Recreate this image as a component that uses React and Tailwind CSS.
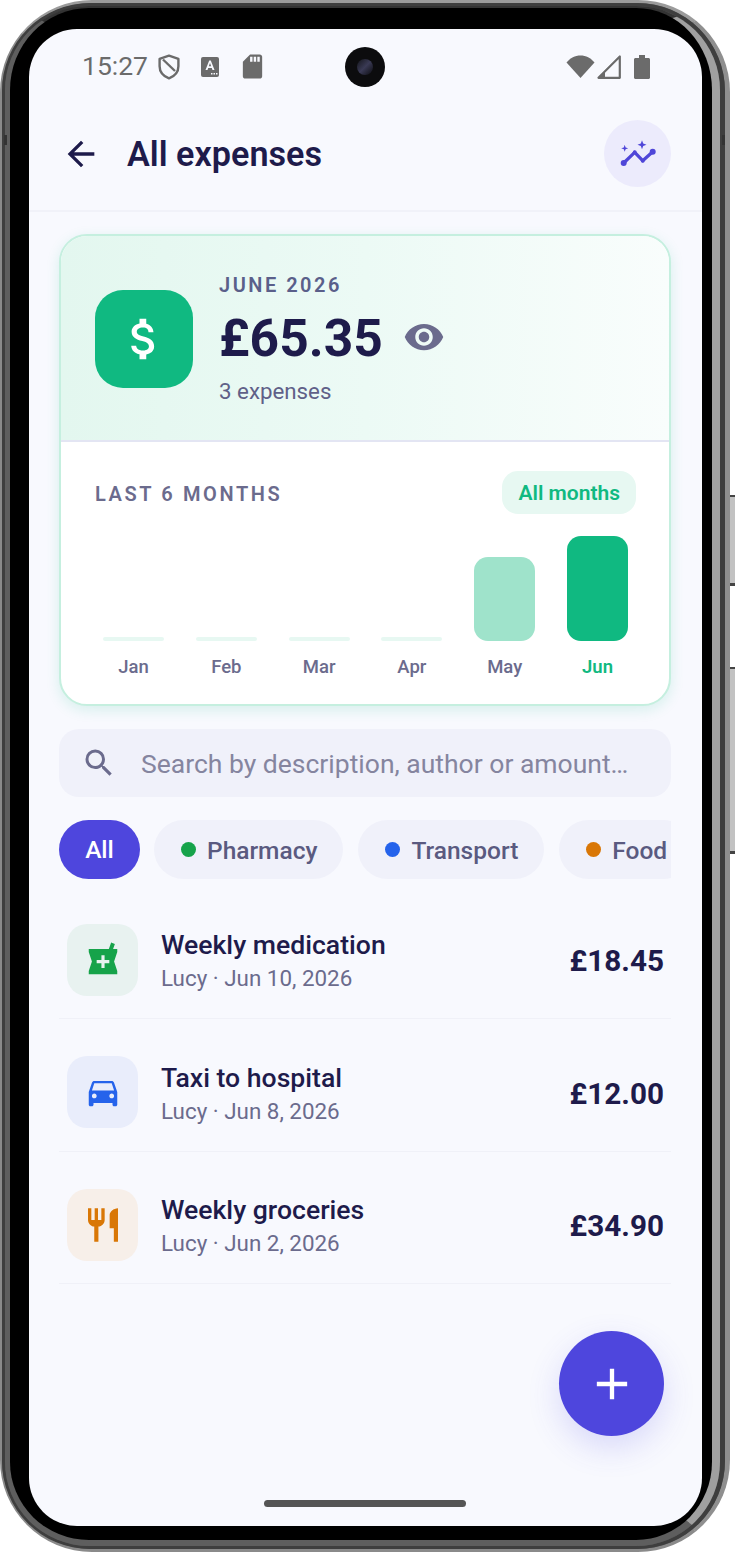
import React from "react";
import { MdArrowBack, MdAttachMoney, MdVisibility, MdLocalPharmacy, MdDirectionsCar, MdRestaurant, MdAdd, MdSearch, MdSdCard } from "react-icons/md";

const ShieldIcon = () => (
  <svg width="22" height="26" viewBox="0 0 22 26" fill="none" stroke="#6b6b6b" strokeWidth="2.400" strokeLinejoin="round">
    <path d="M11 1.600 20.400 4.800v7.400c0 5.600-3.800 9.900-9.400 12.200C5.400 22.100 1.600 17.800 1.600 12.200V4.800Z" />
    <path d="M5 5.500 17 17" />
  </svg>
);

const KeyboardA = () => (
  <svg width="18" height="20" viewBox="0 0 18 20">
    <rect width="18" height="20" rx="2" fill="#6b6b6b" />
    <path d="M4.500 13 8.200 3.500h1.600L13.500 13h-2l-.7-2H7.200l-.7 2ZM7.800 9.300h2.400L9 6Z" fill="#f8f9fe" />
    <rect x="10" y="16" width="1.500" height="1.500" fill="#f8f9fe" />
    <rect x="12.500" y="16" width="1.500" height="1.500" fill="#f8f9fe" />
    <rect x="15" y="16" width="1.500" height="1.500" fill="#f8f9fe" />
  </svg>
);

const Wifi = () => (
  <svg width="29" height="23" viewBox="0 0 29 23"><path d="M14.500 23 .5 7.500C4.300 3 9 .5 14.500.5S24.700 3 28.500 7.500Z" fill="#6b6b6b" /></svg>
);

const Cell = () => (
  <svg width="24" height="24" viewBox="0 0 24 24" fill="none"><path d="M1.500 22.800 22.800 1.500v21.300Z" stroke="#6b6b6b" strokeWidth="2.200" strokeLinejoin="round" /><path d="M1.500 22.800 8 16.500v6.300Z" fill="#6b6b6b" /></svg>
);

const Battery = () => (
  <svg width="16" height="24" viewBox="0 0 16 24"><path d="M5 0h6v3h3.500c.8 0 1.500.7 1.500 1.500V22.500c0 .8-.7 1.500-1.500 1.500h-13C.7 24 0 23.300 0 22.500V4.500C0 3.700.7 3 1.500 3H5Z" fill="#6b6b6b" /></svg>
);

const TrendSpark = () => (
  <svg width="40" height="40" viewBox="0 0 40 40" fill="#4f46d8">
    <path d="M5.700 29 16.700 18.300 24.700 26.700 34.700 17.700" fill="none" stroke="#4f46d8" strokeWidth="3.200" strokeLinejoin="round" />
    <circle cx="5.700" cy="29" r="3" />
    <circle cx="16.700" cy="18.300" r="2" />
    <circle cx="24.700" cy="26.700" r="2" />
    <circle cx="34.700" cy="17.700" r="3" />
    <path d="M6.700 10.800 7.600 13.400 10.200 14.300 7.600 15.200 6.700 17.800 5.800 15.200 3.200 14.300 5.800 13.400Z" />
    <path d="M24 6.200 25.200 9.500 28.500 10.700 25.200 11.900 24 15.200 22.800 11.900 19.500 10.700 22.800 9.500Z" />
  </svg>
);

const Bar = ({ label, active, kind }) => (
  <div className="flex w-[61px] flex-col items-center">
    <div className="flex h-[105px] w-full items-end">
      {kind === "tall" && <div className="h-[105px] w-full rounded-[14px] bg-[#10b981]" />}
      {kind === "mid" && <div className="h-[84px] w-full rounded-[14px] bg-[#9fe3cb]" />}
      {!kind && <div className="h-[4px] w-full rounded-full bg-[#e7f8f2]" />}
    </div>
    <span className={`mt-[14px] text-[18.500px] leading-[24px] font-medium ${active ? "text-[#10b981] font-semibold" : "text-[#6b6b8d]"}`}>{label}</span>
  </div>
);

const Chip = ({ color, label }) => (
  <div className="flex h-[59px] shrink-0 items-center gap-[11px] rounded-full bg-[#f0f1fa] pl-[27px] pr-[26px]">
    <span className="h-[15px] w-[15px] rounded-full" style={{ backgroundColor: color }} />
    <span className="pt-[3px] text-[24.500px] leading-none font-medium text-[#5a5a80] whitespace-nowrap">{label}</span>
  </div>
);

const Row = ({ icon, bg, title, sub, amount }) => (
  <div className="mb-[15.500px] flex h-[117px] items-center border-b border-[#f0f1f8] pl-[8px] pr-[7px] pb-[1px]">
    <div className={`flex h-[72px] w-[71px] shrink-0 items-center justify-center rounded-[20px] ${bg}`}>{icon}</div>
    <div className="ml-[23px] flex flex-1 flex-col pt-[3px]">
      <span className="text-[26.600px] leading-[33px] font-medium text-[#1e1b4b]">{title}</span>
      <span className="mt-[1px] text-[22.400px] leading-[32px] text-[#6b6b8d]">{sub}</span>
    </div>
    <span className="pt-[4px] text-[29.700px] font-bold text-[#1e1b4b]">{amount}</span>
  </div>
);

export default function App() {
  return (
    <div className="relative h-[1553px] w-[735px] overflow-hidden bg-white" style={{ fontFamily: "Roboto, sans-serif" }}>
      <div className="absolute left-[730px] top-[495px] h-[91px] w-[5px] border-t-[2px] border-b-[3px] border-[#444] bg-[#c2c2c2]" />
      <div className="absolute left-[730px] top-[667px] h-[187px] w-[5px] border-t-[2px] border-b-[3px] border-[#444] bg-[#c2c2c2]" />

      <div className="h-[1552px] w-[730px] rounded-[92px] border-t-[3px] border-r-[5px] border-b-[3px] border-l-[2px] border-t-[#9b9b9b] border-r-[#8f8f8f] border-b-[#8a8a8a] border-l-[#8a8a8a] bg-[#555]">
        <div className="h-full w-full rounded-[88px] border-t-[3px] border-r-[5px] border-b-[3px] border-l-[3px] border-[#3e3e3e]">
          <div className="h-full w-full rounded-[84px] border-t-[2px] border-r-[8px] border-b-[6px] border-l-[5px] border-t-[#333] border-r-[#a0a0a0] border-b-[#5e5e5e] border-l-[#5e5e5e] bg-black pt-[21px] pr-[10px] pb-[14px] pl-[19px]">
            <div className="relative flex h-full flex-col overflow-hidden rounded-[48px] bg-[#f8f9fe]">
              {/* status bar */}
              <div className="flex h-[78px] shrink-0 items-center justify-between pr-[52px] pl-[53px] pb-[3px]">
                <div className="flex items-center">
                  <span className="text-[26.500px] leading-none text-[#6b6b6b]">15:27</span>
                  <span className="ml-[10px] flex"><ShieldIcon /></span>
                  <span className="ml-[21px] flex"><KeyboardA /></span>
                  <span className="ml-[23px] flex"><MdSdCard className="-mx-[4px]" size={29} color="#6b6b6b" /></span>
                </div>
                <div className="flex items-center">
                  <Wifi />
                  <span className="ml-[2px] flex"><Cell /></span>
                  <span className="ml-[13px] flex"><Battery /></span>
                </div>
              </div>

              {/* header */}
              <div className="flex h-[105px] shrink-0 items-center justify-between border-b-2 border-[#f1f2f9] pr-[31px] pl-[32px] pb-[10px]">
                <div className="flex items-center">
                  <MdArrowBack size={40} color="#1e1b4b" />
                  <h1 className="ml-[26px] pt-[2px] text-[34.200px] leading-none font-semibold text-[#1e1b4b]">All expenses</h1>
                </div>
                <div className="flex h-[67px] w-[67px] items-center justify-center rounded-full bg-[#ecebfc]">
                  <TrendSpark />
                </div>
              </div>

              <div className="flex flex-1 flex-col pr-[31px] pl-[30px] pt-[22px]">
                {/* summary card */}
                <div className="h-[472px] shrink-0 overflow-hidden rounded-[28px] border-2 border-[#c5efdf] bg-white shadow-[0_4px_14px_rgba(16,185,129,0.14)]">
                  <div className="flex h-[206px] items-center border-b-2 border-[#e3e5f3] bg-gradient-to-r from-[#e3f7ef] via-[#ecfaf5] to-[#f9fdfc] pl-[34px]">
                    <div className="mt-[2px] flex h-[98px] w-[98px] items-center justify-center rounded-[28px] bg-[#10b981]">
                      <MdAttachMoney size={54} color="#fff" />
                    </div>
                    <div className="ml-[26px] flex flex-col pt-[2px]">
                      <span className="text-[20px] leading-[26px] font-semibold tracking-[2.500px] text-[#5a5f8a]">JUNE 2026</span>
                      <div className="mt-[8px] flex items-center">
                        <span className="text-[51.500px] leading-[66px] font-bold text-[#1e1b4b]">£65.35</span>
                        <MdVisibility className="mb-[3px] ml-[20px]" size={42} color="#6b6b8d" />
                      </div>
                      <span className="mt-[4.500px] text-[22.300px] leading-[30px] text-[#5f6088]">3 expenses</span>
                    </div>
                  </div>

                  <div className="pl-[34px] pr-[33px] pt-[28px]">
                    <div className="flex h-[44px] items-center justify-between">
                      <span className="pt-[4px] text-[20px] font-semibold tracking-[2.600px] text-[#6b6b8d]">LAST 6 MONTHS</span>
                      <span className="flex h-[43px] items-center rounded-[16px] bg-[#e7f8f2] px-[16px] pt-[4px] text-[21px] font-semibold text-[#10b981]">All months</span>
                    </div>
                    <div className="mt-[22px] flex justify-between px-[8px]">
                      <Bar label="Jan" />
                      <Bar label="Feb" />
                      <Bar label="Mar" />
                      <Bar label="Apr" />
                      <Bar label="May" kind="mid" />
                      <Bar label="Jun" kind="tall" active />
                    </div>
                  </div>
                </div>

                {/* search */}
                <div className="mt-[23px] flex h-[68px] shrink-0 items-center rounded-[20px] bg-[#f0f1fa] pl-[22px]">
                  <MdSearch size={36} color="#6b6b8d" />
                  <span className="ml-[24px] pt-[2px] text-[26.500px] leading-none text-[#85859f] whitespace-nowrap">Search by description, author or amount…</span>
                </div>

                {/* chips */}
                <div className="mt-[23px] flex shrink-0 gap-[15px] overflow-hidden">
                  <div className="-mr-[1px] flex h-[59px] w-[81px] shrink-0 items-center justify-center rounded-full bg-[#4e46dd] pt-[2px] text-[24.500px] font-medium text-white">All</div>
                  <Chip color="#16a34a" label="Pharmacy" />
                  <Chip color="#2563eb" label="Transport" />
                  <Chip color="#d97706" label="Food" />
                </div>

                {/* rows */}
                <div className="mt-[23px] flex flex-col">
                  <Row bg="bg-[#e8f2f0]" icon={<MdLocalPharmacy size={38} color="#16a34a" />} title="Weekly medication" sub="Lucy · Jun 10, 2026" amount="£18.45" />
                  <Row bg="bg-[#e9edfb]" icon={<MdDirectionsCar size={38} color="#2563eb" />} title="Taxi to hospital" sub="Lucy · Jun 8, 2026" amount="£12.00" />
                  <Row bg="bg-[#f7efe9]" icon={<MdRestaurant size={40} color="#d97706" />} title="Weekly groceries" sub="Lucy · Jun 2, 2026" amount="£34.90" />
                </div>
              </div>

              {/* FAB */}
              <button className="absolute top-[1302px] left-[530px] flex h-[105px] w-[105px] items-center justify-center rounded-full bg-[#4e46dd] shadow-[0_12px_32px_rgba(79,70,229,0.18)]">
                <MdAdd size={52} color="#fff" />
              </button>

              {/* gesture bar */}
              <div className="absolute top-[1471px] left-[235px] h-[7px] w-[202px] rounded-full bg-[#555]" />

              {/* camera */}
              <div className="absolute top-[18px] left-[316px] flex h-[40px] w-[40px] items-center justify-center rounded-full bg-[#0c0c0e]">
                <div className="h-[16px] w-[16px] rounded-full bg-gradient-to-br from-[#15161c] via-[#3a3a55] to-[#0d0d12]" />
              </div>
            </div>
          </div>
        </div>
      </div>
      <div className="absolute left-[4px] top-[135px] h-[10px] w-[3px] bg-[#333]" />
      <div className="absolute left-[722px] top-[135px] h-[10px] w-[3px] bg-[#333]" />
    </div>
  );
}
